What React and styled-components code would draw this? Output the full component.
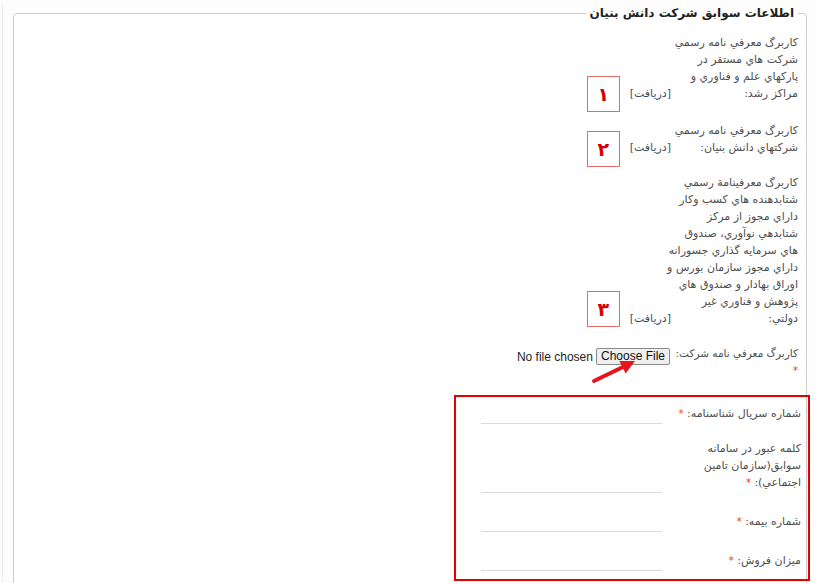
import React from 'react';
import styled, { createGlobalStyle } from 'styled-components';

const GlobalStyle = createGlobalStyle`
  html, body {
    margin: 0;
    padding: 0;
    background: #fdfdfd;
  }
  body {
    font-family: "DejaVu Sans", "Noto Sans", sans-serif;
    overflow: hidden;
  }
`;

const Page = styled.div`
  direction: rtl;
  height: 583px;
  margin-left: 2px;
  border-left: 1px solid #ececec;
  padding: 0 10px 0 10px;
`;

const Panel = styled.fieldset`
  margin: 4px 0 0;
  padding: 12px 8px 0;
  min-height: 620px;
  border: 1px solid #cdcdcd;
  border-radius: 4px;
  background: #fff;
`;

const Legend = styled.legend`
  padding: 0 4px;
  font-size: 12px;
  font-weight: bold;
  color: #222;
  line-height: 18px;
`;

const Rows = styled.div`
  display: flex;
  flex-direction: column;
  gap: 18px;
`;

const Row = styled.div`
  display: flex;
  align-items: ${(p) => p.align || 'flex-end'};
  gap: ${(p) => p.gap || 9}px;
`;

const Label = styled.div`
  flex: 0 0 ${(p) => p.width || 118}px;
  min-width: 0;
  font-size: ${(p) => p.size || 11}px;
  line-height: 17px;
  color: #4d4d4d;
  white-space: nowrap;
`;

const Required = styled.span`
  color: #e53935;
  font-size: 10px;
`;

const DownloadLink = styled.a`
  font-size: 11px;
  line-height: 17px;
  color: #3a5068;
  text-decoration: none;
  cursor: pointer;
`;

const Marker = styled.span`
  position: relative;
  top: ${(p) => p.drop}px;
  width: 31px;
  height: 34px;
  margin-right: 1px;
  border: 1px solid #e46a6a;
  display: flex;
  align-items: center;
  justify-content: center;
  color: #d40000;
  font-size: 19px;
  font-weight: bold;
`;

const FileField = styled.div`
  position: relative;
`;

const FileInput = styled.input`
  font: 12px "Liberation Sans", Arial, sans-serif;
  color: #222;
  &::file-selector-button {
    font: 12px "Liberation Sans", Arial, sans-serif;
    padding: 0 4px;
    height: 17px;
    border: 1px solid #8a8a8a;
    border-radius: 2px;
    background: #efefef;
    color: #111;
    margin-inline-end: 3px;
  }
`;

const Arrow = styled.svg`
  position: absolute;
  top: 11px;
  right: 29px;
`;

const FormSection = styled.div`
  position: relative;
  margin-top: 4px;
  margin-right: -3px;
  display: flex;
  flex-direction: column;
  gap: 18px;
  &::after {
    content: '';
    position: absolute;
    top: -6px;
    bottom: -12px;
    right: -9px;
    width: 352px;
    border: 2px solid #e50000;
    pointer-events: none;
  }
`;

const TextField = styled.input`
  flex: 0 0 173px;
  height: 20px;
  margin-bottom: -2px;
  border: none;
  border-bottom: 1px solid #d9d9d9;
  background: transparent;
  outline: none;
`;

const Lines = ({ lines, required }) => (
  <>
    {lines.map((line, i) => (
      <React.Fragment key={i}>
        {i > 0 && <br />}
        {line}
      </React.Fragment>
    ))}
    {required && <> <Required>*</Required></>}
  </>
);

const downloads = [
  {
    lines: ['کاربرگ معرفي نامه رسمي', 'شرکت هاي مستقر در', 'پارکهاي علم و فناوري و', 'مراکز رشد:'],
    mark: '۱',
    drop: 10,
  },
  {
    lines: ['کاربرگ معرفي نامه رسمي', 'شرکتهاي دانش بنيان:'],
    mark: '۲',
    drop: 11,
  },
  {
    lines: [
      'کاربرگ معرفينامة رسمي',
      'شتابدهنده هاي کسب وکار',
      'داراي مجوز از مرکز',
      'شتابدهي نوآوري، صندوق',
      'هاي سرمايه گذاري جسورانه',
      'داراي مجوز سازمان بورس و',
      'اوراق بهادار و صندوق هاي',
      'پژوهش و فناوري غير',
      'دولتي:',
    ],
    mark: '۳',
    drop: 0,
  },
];

const fields = [
  { lines: ['شماره سريال شناسنامه:'] },
  { lines: ['کلمه عبور در سامانه', 'سوابق(سازمان تامين', 'اجتماعي):'] },
  { lines: ['شماره بيمه:'] },
  { lines: ['ميزان فروش:'] },
];

export default function App() {
  return (
    <>
      <GlobalStyle />
      <Page>
        <Panel>
          <Legend>اطلاعات سوابق شرکت دانش بنيان</Legend>
          <Rows>
            {downloads.map((d) => (
              <Row key={d.mark}>
                <Label>
                  <Lines lines={d.lines} />
                </Label>
                <DownloadLink>[دريافت]</DownloadLink>
                <Marker drop={d.drop}>{d.mark}</Marker>
              </Row>
            ))}
            <Row align="flex-start" gap={10}>
              <Label size={10.5}>
                کاربرگ معرفي نامه شرکت:
                <br />
                <Required>*</Required>
              </Label>
              <FileField>
                <FileInput type="file" />
                <Arrow width="52" height="30" viewBox="0 0 52 30">
                  <line x1="5" y1="25" x2="35" y2="10.5" stroke="#e8141b" strokeWidth="4" strokeLinecap="round" />
                  <polygon points="46,5 36.6,17.6 30.4,5" fill="#e8141b" />
                </Arrow>
              </FileField>
            </Row>
            <FormSection>
              {fields.map((f, i) => (
                <Row key={i}>
                  <Label width={130}>
                    <Lines lines={f.lines} required />
                  </Label>
                  <TextField type="text" />
                </Row>
              ))}
            </FormSection>
          </Rows>
        </Panel>
      </Page>
    </>
  );
}
